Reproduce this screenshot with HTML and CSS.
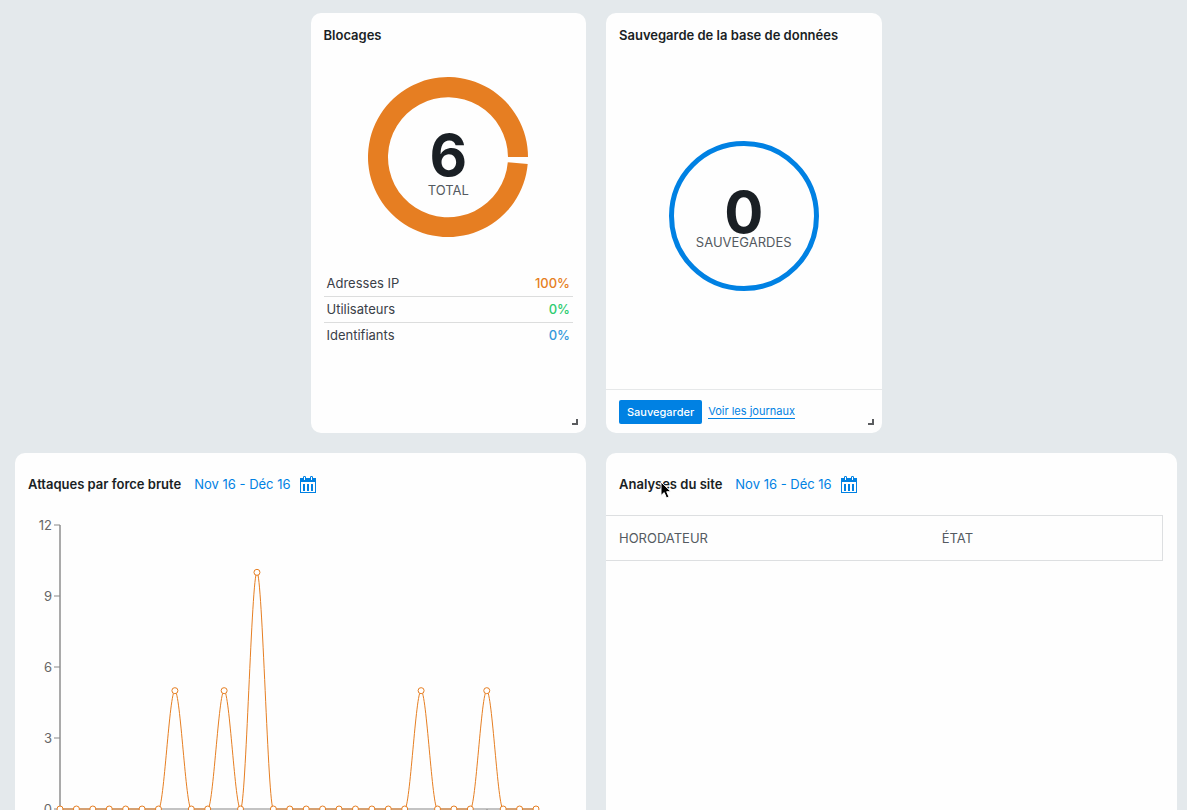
FILE: index.html
```html
<!DOCTYPE html>
<html lang="fr">
<head>
<meta charset="utf-8">
<title>Tableau de bord</title>
<link rel="stylesheet" href="styles.css">
</head>
<body>
<main class="dashboard">
  <section class="card card-lockouts">
    <header class="card-header"><h2 class="card-title">Blocages</h2></header>
    <div class="card-body lockouts">
      <div class="gauge">
        <svg class="gauge-ring" width="160" height="160" viewBox="0 0 160 160" aria-hidden="true">
          <path fill="#e67e22" d="M160 80A80 80 0 1 0 159.7 87L139.8 85.2A60 60 0 1 1 140 80Z"/>
        </svg>
        <div class="gauge-label"><span class="gauge-value">6</span><span class="gauge-caption">TOTAL</span></div>
      </div>
      <table class="legend">
        <tr><th scope="row">Adresses IP</th><td class="orange">100%</td></tr>
        <tr><th scope="row">Utilisateurs</th><td class="green">0%</td></tr>
        <tr><th scope="row">Identifiants</th><td class="blue">0%</td></tr>
      </table>
    </div>
    <span class="resize-handle"></span>
  </section>

  <section class="card card-backup">
    <header class="card-header"><h2 class="card-title">Sauvegarde de la base de données</h2></header>
    <div class="card-body backup">
      <div class="circle"><span class="circle-value">0</span><span class="gauge-caption">SAUVEGARDES</span></div>
    </div>
    <footer class="card-footer">
      <button class="button" type="button">Sauvegarder</button>
      <a class="link" href="#">Voir les journaux</a>
    </footer>
    <span class="resize-handle"></span>
  </section>

  <section class="card card-wide card-attacks">
    <header class="card-header card-header-tall">
      <h2 class="card-title">Attaques par force brute</h2>
      <button class="period" type="button">Nov 16 - Déc 16
        <svg class="calendar" width="16" height="17" viewBox="0 0 16 17" aria-hidden="true"><path fill="#0081e3" fill-rule="evenodd" d="M0 2H3V1Q3 0 4.500 0Q6 0 6 1V2H10V1Q10 0 11.500 0Q13 0 13 1V2H16V17H0ZM1 6V16H15V6ZM4 1V4H5V1ZM11 1V4H12V1Z"/><path fill="#0081e3" d="M3 8H5V15H3ZM7 8H9V15H7ZM11 8H13V15H11Z"/></svg>
      </button>
    </header>
    <svg class="chart" width="571" height="340" viewBox="0 0 571 340" role="img" aria-label="Attaques par force brute">
      <g class="axis">
        <path class="axis-line" d="M45 10V294"/>
        <path d="M39 10H45M39 81H45M39 152H45M39 223H45M39 294H521M472 294V300"/>
      </g>
      <g class="axis-labels">
        <text x="37" y="15">12</text><text x="37" y="86">9</text><text x="37" y="157">6</text><text x="37" y="228">3</text><text x="37" y="299">0</text>
      </g>
      <path class="series" id="series"/>
      <g class="points" id="points"></g>
    </svg>
  </section>

  <section class="card card-wide card-scans">
    <header class="card-header card-header-tall">
      <h2 class="card-title">Analyses du site</h2>
      <button class="period" type="button">Nov 16 - Déc 16
        <svg class="calendar" width="16" height="17" viewBox="0 0 16 17" aria-hidden="true"><path fill="#0081e3" fill-rule="evenodd" d="M0 2H3V1Q3 0 4.500 0Q6 0 6 1V2H10V1Q10 0 11.500 0Q13 0 13 1V2H16V17H0ZM1 6V16H15V6ZM4 1V4H5V1ZM11 1V4H12V1Z"/><path fill="#0081e3" d="M3 8H5V15H3ZM7 8H9V15H7ZM11 8H13V15H11Z"/></svg>
      </button>
      <svg class="cursor" width="14" height="20" viewBox="0 0 14 20" aria-hidden="true"><path fill="#000" stroke="#fff" stroke-width="1" d="M1 1V14.500L4.200 11.600L6.500 17L9 16L6.700 10.700H11Z"/></svg>
    </header>
    <table class="scans">
      <thead><tr><th class="col-time" scope="col">HORODATEUR</th><th scope="col">ÉTAT</th></tr></thead>
    </table>
  </section>
</main>
<script src="chart.js"></script>
</body>
</html>
```

FILE: chart.js
```
const counts = [0,0,0,0,0,0,0,5,0,0,5,0,10,0,0,0,0,0,0,0,0,0,5,0,0,0,5,0,0,0];
const left = 45;
const base = 294;
const step = 476 / (counts.length - 1);
const unit = 284 / 12;
const points = counts.map((count, i) => [left + i * step, base - count * unit]);

// Cubic segments with flat tangents at every point.
let path = `M${points[0]}`;
for (let i = 1; i < points.length; i++) {
  const [x0, y0] = points[i - 1];
  const [x1, y1] = points[i];
  path += `C${x0 + step / 3},${y0} ${x1 - step / 3},${y1} ${x1},${y1}`;
}
document.getElementById("series").setAttribute("d", path);

const group = document.getElementById("points");
for (const [x, y] of points) {
  const dot = document.createElementNS("http://www.w3.org/2000/svg", "circle");
  dot.setAttribute("cx", x);
  dot.setAttribute("cy", y);
  dot.setAttribute("r", 3);
  group.append(dot);
}
```

FILE: styles.css
```css
* { box-sizing: border-box; }

body {
  margin: 0;
  height: 100vh;
  overflow: hidden;
  background: #e4e9ec;
  color: #1a1f24;
  font-family: Inter, "Liberation Sans", sans-serif;
  font-size: 13px;
  line-height: 18px;
}

.dashboard {
  display: grid;
  grid-template-columns: repeat(4, 1fr);
  grid-auto-rows: 420px;
  gap: 20px;
  padding: 13px 10px 20px 15px;
}

.card {
  position: relative;
  display: flex;
  flex-direction: column;
  background: #fefefe;
  border-radius: 10px;
}
.card-lockouts { grid-column: 2; }
.card-wide { grid-column: span 2; overflow: hidden; }

.card-header {
  position: relative;
  display: flex;
  align-items: center;
  gap: 13px;
  padding: 13px;
}
.card-header-tall { height: 62px; }

.card-title { margin: 0; font-size: 13px; font-weight: 600; }

.card-body { flex: 1; display: flex; flex-direction: column; align-items: center; }

.lockouts { padding: 20px 13px; }
.gauge { display: grid; place-items: center; }
.gauge-ring, .gauge-label { grid-area: 1 / 1; }
.gauge-label { display: flex; flex-direction: column; align-items: center; gap: 5px; padding-top: 17px; }
.gauge-value, .circle-value { font-size: 58px; line-height: 44px; font-weight: 700; }
.gauge-caption { color: #545a61; line-height: 16px; }

.legend { width: 100%; margin-top: 33px; border-collapse: collapse; color: #3a4048; }
.legend th, .legend td { height: 26px; padding: 0 3px; font-weight: 400; text-align: left; }
.legend tr + tr { border-top: 1px solid #dcdddd; }
.legend td { font-weight: 500; text-align: right; }
.legend .orange { color: #e67e22; }
.legend .green { color: #2ecc71; }
.legend .blue { color: #3498db; }

.backup { justify-content: center; padding-bottom: 14px; }
.circle {
  display: flex;
  flex-direction: column;
  align-items: center;
  justify-content: center;
  width: 150px;
  height: 150px;
  padding-top: 8px;
  border: 5px solid #0081e3;
  border-radius: 50%;
}

.card-footer {
  display: flex;
  align-items: center;
  gap: 6px;
  padding: 10px 13px 9px;
  border-top: 1px solid #e6e8e9;
}
.button {
  height: 24px;
  padding: 0 8px;
  border: 0;
  border-radius: 2px;
  background: #0081e3;
  color: #fff;
  font: 500 11px/24px Inter, sans-serif;
}
.link {
  border-bottom: 1px solid #0081e3;
  color: #0081e3;
  font-size: 11px;
  line-height: 13px;
  text-decoration: none;
}

.resize-handle {
  position: absolute;
  right: 8px;
  bottom: 8px;
  width: 6px;
  height: 6px;
  border: solid #5a5c5f;
  border-width: 0 2px 2px 0;
}

.period {
  display: flex;
  align-items: center;
  gap: 9px;
  padding: 0;
  border: 0;
  background: none;
  color: #0081e3;
  font: 400 13px/18px Inter, sans-serif;
}

.cursor { position: absolute; left: 54px; top: 28px; }

.chart { flex: none; }
.axis path { fill: none; stroke: #888; stroke-width: 1; }
.axis .axis-line { stroke: #aaa; stroke-width: 2; }
.axis-labels text { fill: #666; font-size: 13px; text-anchor: end; }
.series { fill: none; stroke: #e67e22; stroke-width: 1; }
.points circle { fill: #fff; stroke: #e67e22; stroke-width: 1; }

.scans {
  width: calc(100% - 14px);
  border-collapse: collapse;
  table-layout: fixed;
  border: 1px solid #dddfe1;
  border-left: 0;
}
.scans th { height: 45px; padding: 0 13px; color: #545a61; font-weight: 400; text-align: left; }
.scans .col-time { width: 58%; }
```
